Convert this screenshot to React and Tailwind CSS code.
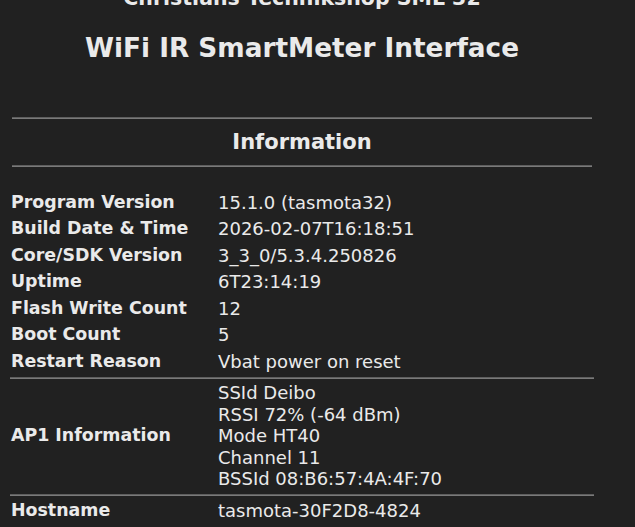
import React from 'react';

const rows = [
  ['Program Version', ['15.1.0 (tasmota32)']],
  ['Build Date & Time', ['2026-02-07T16:18:51']],
  ['Core/SDK Version', ['3_3_0/5.3.4.250826']],
  ['Uptime', ['6T23:14:19']],
  ['Flash Write Count', ['12']],
  ['Boot Count', ['5']],
  ['Restart Reason', ['Vbat power on reset']],
  null,
  ['AP1 Information', ['SSId Deibo', 'RSSI 72% (-64 dBm)', 'Mode HT40', 'Channel 11', 'BSSId 08:B6:57:4A:4F:70']],
  null,
  ['Hostname', ['tasmota-30F2D8-4824']],
];

const Rule = ({ className = '' }) => (
  <div className={`h-[2px] border-t border-t-[#5e5e5e] border-b border-b-[#7a7a7a] ${className}`} />
);

export default function App() {
  return (
    <div className="min-h-[527px] h-[527px] overflow-hidden bg-[#212121] text-[#eaeaea] font-['DejaVu_Sans',sans-serif]">
      <div className="ml-[10px] w-[584px] -mt-[15px]">
        <div className="text-center font-bold text-[20.5px] leading-[26px]">Christians Technikshop SML 32</div>
        <div className="text-center font-bold text-[26.3px] leading-[32px] mt-[21px]">WiFi IR SmartMeter Interface</div>

        <div className="mx-[2px] mt-[53px]">
          <Rule />
          <div className="text-center font-bold text-[21px] leading-[46px]">Information</div>
          <Rule />
        </div>

        <div className="mt-[22px]">
          {rows.map((row, i) =>
            row === null ? (
              <Rule key={i} className="mt-[2px] mb-[1px]" />
            ) : (
              <div key={i} className="grid grid-cols-[208px_1fr] items-center py-[2.5px] leading-[21.5px]">
                <div className="pl-[1px] font-bold text-[17.4px]">{row[0]}</div>
                <div className="text-[18px]">
                  {row[1].map((v) => (
                    <div key={v}>{v}</div>
                  ))}
                </div>
              </div>
            )
          )}
        </div>
      </div>
    </div>
  );
}
